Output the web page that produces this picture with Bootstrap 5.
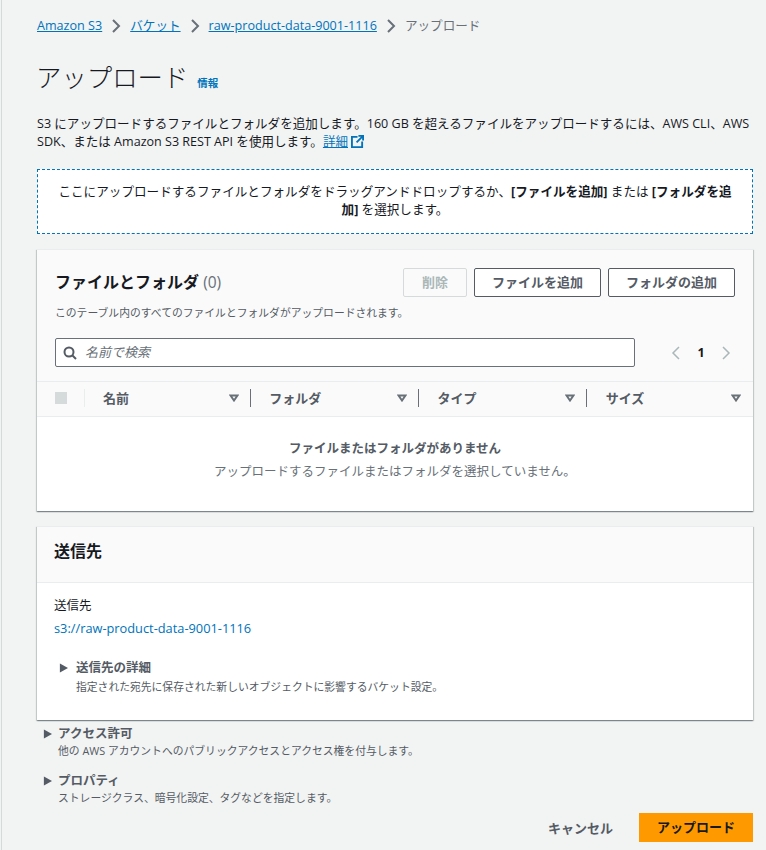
<!DOCTYPE html>
<html lang="ja"><head><meta charset="utf-8"><title>アップロード</title>
<link href="https://cdn.jsdelivr.net/npm/bootstrap@5.3.0/dist/css/bootstrap.min.css" rel="stylesheet">
<style>
html,body{height:850px;overflow:hidden}
body{background:#f2f3f3;color:#16191f;font-family:"Open Sans","Noto Sans CJK JP",sans-serif;font-size:12.5px;line-height:18px}
.pg{margin-left:1px;border-left:1px solid #d5dbdb;height:850px;padding:0 13px 0 35px}
a{color:#0073bb}
.crumbs{height:52px;color:#687078;gap:7px;font-size:12.6px}
.crumbs svg{width:12px;height:14px;margin:0 1px}
.ttl{height:63px;gap:9px;align-items:flex-start}
.ttl h1{font-size:25.4px;font-weight:300;line-height:50px;margin:0 0 0 -1px;color:#16191f}
.ttl a{font-size:10.5px;font-weight:700;text-decoration:none;line-height:14px;margin-top:24px}
.desc{margin:0 0 18px;height:36px;font-size:12.55px}
.ext{width:13px;height:13px;vertical-align:-2px;margin-left:3px}
.drop{height:65px;background:#fff;border:1px dashed #0073bb;text-align:center;padding:13px 16px 0;margin-bottom:15px;font-size:12.6px}
.panel{background:#fff;box-shadow:0 1px 1px 0 rgba(0,28,36,.3),1px 1px 1px 0 rgba(0,28,36,.15),-1px 1px 1px 0 rgba(0,28,36,.15);border-top:1px solid #eaeded}
.ph{background:#fafafa}
.p1{height:262px;margin-bottom:15px}
.top{padding:18px 18px 0;height:131px}
.t1{font-size:16px;font-weight:700;line-height:28px}
.t1 span{font-weight:400;color:#687078;font-size:15.5px}
.acts{gap:7px}
.bt{height:29px;font-size:13px;font-weight:700;line-height:27px;padding:0;border:1px solid #545b64;border-radius:2px;background:#fff;color:#545b64;text-align:center}
.bd{width:64px;border-color:#d5dbdb;color:#aab7b8;background:#fafafa}
.ba{width:127px}
.sub{font-size:10.8px;line-height:16px;margin-top:8px;color:#545b64}
.srow{margin-top:17px}
.sbox{flex:none;width:580px;height:29px;border:1px solid #687078;border-radius:2px;background:#fff;padding-left:7px;gap:8px;font-style:italic;color:#687078;font-size:13px;line-height:27px}
.pager{margin-left:35px;width:62px;font-weight:700;color:#16191f}
.thd{height:36px;background:#fafafa;border-top:1px solid #eaeded;border-bottom:1px solid #eaeded;padding:0 0 2px 18px;color:#545b64;font-weight:700;font-size:13px}
.cb{width:12px;height:12px;background:#d5dbdb;flex:none}
.cols{width:18px;height:18px;margin-right:18px;border-right:1px solid #eaeded;flex:none}
.col1{width:147px;padding-right:11px}
.col2{width:167.3px;padding-left:18.5px;padding-right:11px}
.col3{width:166px;padding-right:12px}
.hc{height:18px;line-height:18px}
.dv{width:1px;height:18px;background:#687078;flex:none}
.tri{width:10px;height:8px;flex:none}
.emp{text-align:center;color:#687078;padding-top:20px;line-height:23px}
.emp b{display:block;color:#545b64}
.p2{height:194px}
.h2x{height:56px;background:#fafafa;border-bottom:1px solid #eaeded;padding:14px 17px;font-size:16px;font-weight:700;line-height:20px}
.bd2{padding:14px 17px 0}
.bd2 a{text-decoration:none;display:block;margin-top:5px;font-size:12.8px}
.bd2 a{margin-top:4px}
.ex{gap:7px;font-weight:700;color:#545b64;font-size:12.5px}
.ex svg{width:9px;height:10px;flex:none}
.exs{font-size:10.8px;font-weight:400;color:#545b64;line-height:16px}
.dt{margin:22px 0 0 5px;gap:8px}
.dts{padding-left:22px;margin-top:2px}
.acc{margin:5px 0 0 6px;gap:6px}
.pro{margin:13px 0 0 6px;gap:6px}
.subx{padding-left:21px}
.foot{gap:26px;margin-top:7px}
.cn{font-weight:700;color:#545b64;font-size:13px}
.up{width:114px;height:29px;background:#f90;font-weight:700;font-size:13px;color:#16191f;text-align:center;line-height:29px}
</style></head><body>
<div class="pg">
<nav class="crumbs d-flex align-items-center"><a href="#">Amazon S3</a>
<svg viewBox="0 0 12 14"><path d="M3 1l6 6-6 6" fill="none" stroke="#687078" stroke-width="2"/></svg>
<a href="#">バケット</a>
<svg viewBox="0 0 12 14"><path d="M3 1l6 6-6 6" fill="none" stroke="#687078" stroke-width="2"/></svg>
<a href="#">raw-product-data-9001-1116</a>
<svg viewBox="0 0 12 14"><path d="M3 1l6 6-6 6" fill="none" stroke="#687078" stroke-width="2"/></svg>
<span>アップロード</span></nav>
<div class="ttl d-flex"><h1>アップロード</h1><a href="#">情報</a></div>
<p class="desc">S3 にアップロードするファイルとフォルダを追加します。160 GB を超えるファイルをアップロードするには、AWS CLI、AWS SDK、または Amazon S3 REST API を使用します。<a href="#">詳細<svg class="ext" viewBox="0 0 14 14" fill="none" stroke="#0073bb" stroke-width="2"><path d="M7 2H1v11h11V7"/><path d="M8 1h5v5M13 1L6 8"/></svg></a></p>
<div class="drop">ここにアップロードするファイルとフォルダをドラッグアンドドロップするか、<b>[ファイルを追加]</b> または <b>[フォルダを追加]</b> を選択します。</div>
<section class="panel p1">
<div class="ph top">
<div class="d-flex justify-content-between"><div class="t1">ファイルとフォルダ <span>(0)</span></div>
<div class="d-flex acts"><div class="bt bd">削除</div><div class="bt ba">ファイルを追加</div><div class="bt ba">フォルダの追加</div></div></div>
<div class="sub">このテーブル内のすべてのファイルとフォルダがアップロードされます。</div>
<div class="d-flex align-items-center srow"><div class="sbox d-flex align-items-center"><svg width="14" height="14" viewBox="0 0 14 14" fill="none" stroke="#545b64" stroke-width="2"><circle cx="6" cy="6" r="4.5"/><path d="M9.5 9.5L13 13"/></svg><span>名前で検索</span></div>
<div class="pager d-flex align-items-center justify-content-between"><svg width="12" height="14" viewBox="0 0 12 14" fill="none" stroke="#aab7b8" stroke-width="1.5"><path d="M9 1L3 7l6 6"/></svg><span>1</span><svg width="12" height="14" viewBox="0 0 12 14" fill="none" stroke="#aab7b8" stroke-width="1.5"><path d="M3 1l6 6-6 6"/></svg></div></div>
</div>
<div class="thd d-flex align-items-center">
<div class="cb"></div><div class="cols"></div>
<div class="hc col1 d-flex justify-content-between align-items-center"><span>名前</span><svg class="tri" viewBox="0 0 10 8" fill="none" stroke="#687078" stroke-width="2"><path d="M1.5 1.5h7L5 6.5z"/></svg></div><div class="dv"></div>
<div class="hc col2 d-flex justify-content-between align-items-center"><span>フォルダ</span><svg class="tri" viewBox="0 0 10 8" fill="none" stroke="#687078" stroke-width="2"><path d="M1.5 1.5h7L5 6.5z"/></svg></div><div class="dv"></div>
<div class="hc col2 d-flex justify-content-between align-items-center"><span>タイプ</span><svg class="tri" viewBox="0 0 10 8" fill="none" stroke="#687078" stroke-width="2"><path d="M1.5 1.5h7L5 6.5z"/></svg></div><div class="dv"></div>
<div class="hc col2 col3 d-flex justify-content-between align-items-center"><span>サイズ</span><svg class="tri" viewBox="0 0 10 8" fill="none" stroke="#687078" stroke-width="2"><path d="M1.5 1.5h7L5 6.5z"/></svg></div>
</div>
<div class="emp"><b>ファイルまたはフォルダがありません</b>アップロードするファイルまたはフォルダを選択していません。</div>
</section>
<section class="panel p2">
<div class="h2x">送信先</div>
<div class="bd2"><div>送信先</div><a href="#">s3://raw-product-data-9001-1116</a>
<div class="ex d-flex align-items-center dt"><svg viewBox="0 0 10 10"><path d="M1 0l9 5-9 5z" fill="#545b64"/></svg><span>送信先の詳細</span></div>
<div class="exs dts">指定された宛先に保存された新しいオブジェクトに影響するバケット設定。</div></div>
</section>
<div class="ex d-flex align-items-center acc"><svg viewBox="0 0 10 10"><path d="M1 0l9 5-9 5z" fill="#545b64"/></svg><span>アクセス許可</span></div>
<div class="exs subx">他の AWS アカウントへのパブリックアクセスとアクセス権を付与します。</div>
<div class="ex d-flex align-items-center pro"><svg viewBox="0 0 10 10"><path d="M1 0l9 5-9 5z" fill="#545b64"/></svg><span>プロパティ</span></div>
<div class="exs subx">ストレージクラス、暗号化設定、タグなどを指定します。</div>
<div class="foot d-flex justify-content-end align-items-center"><span class="cn">キャンセル</span><div class="up">アップロード</div></div>
</div>
</body></html>
